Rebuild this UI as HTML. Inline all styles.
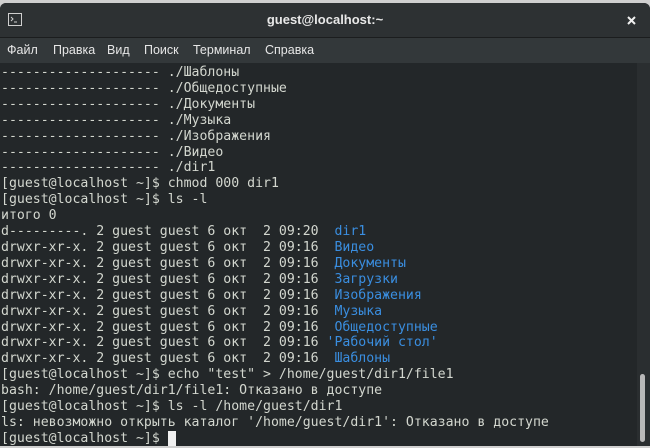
<!DOCTYPE html>
<html><head><meta charset="utf-8"><style>
html,body{margin:0;padding:0;width:650px;height:448px;overflow:hidden;background:#d0d0d0;}
.win{position:absolute;left:0;top:3px;width:650px;height:443px;background:#232729;border-radius:6px 6px 0 0;overflow:hidden;}
.title{position:absolute;left:0;top:0;width:650px;height:34px;background:#2d3133;border-bottom:1px solid #1b1d1e;color:#e8e8e8;font:bold 13px "Liberation Sans","DejaVu Sans",sans-serif;text-align:center;line-height:34px;}
.menu{position:absolute;left:0;top:35px;width:650px;height:25px;background:#33383a;color:#e6e6e6;font:12.5px "Liberation Sans","DejaVu Sans",sans-serif;line-height:25px;}
.menu span{position:absolute;top:0}
.term{position:absolute;left:1px;top:62px;width:636px;margin:0;color:#d3d7cf;font:13.2px "DejaVu Sans Mono","Liberation Mono",monospace;line-height:15.9px;white-space:pre;}
.b{color:#3a8ee0}
.sb{position:absolute;left:637px;top:60px;width:13px;height:383px;background:#2a2e30;}
.th{position:absolute;left:3px;top:311px;width:5px;height:68px;background:#b8b8b8;border-radius:3px;}
.cur{background:#f0f0f0;color:#232729}
</style></head><body>
<div class="win">
<div class="title">guest@localhost:~
<svg style="position:absolute;left:8px;top:10px" width="14" height="13"><rect x="0.5" y="0.5" width="13" height="12" fill="none" stroke="#cfcfcf"/><path d="M3 4l2 2-2 2M6 9h3" stroke="#cfcfcf" fill="none"/></svg>
<svg style="position:absolute;left:627px;top:13px" width="9" height="9"><path d="M1 1L8 8M8 1L1 8" stroke="#f0f0f0" stroke-width="2"/></svg>
</div>
<div class="menu"><span style="left:7px">Файл</span><span style="left:53px">Правка</span><span style="left:107px">Вид</span><span style="left:144px">Поиск</span><span style="left:193px">Терминал</span><span style="left:265px">Справка</span></div>
<pre class="term">-------------------- ./Шаблоны
-------------------- ./Общедоступные
-------------------- ./Документы
-------------------- ./Музыка
-------------------- ./Изображения
-------------------- ./Видео
-------------------- ./dir1
[guest@localhost ~]$ chmod 000 dir1
[guest@localhost ~]$ ls -l
итого 0
d---------. 2 guest guest 6 окт  2 09:20  <span class="b">dir1</span>
drwxr-xr-x. 2 guest guest 6 окт  2 09:16  <span class="b">Видео</span>
drwxr-xr-x. 2 guest guest 6 окт  2 09:16  <span class="b">Документы</span>
drwxr-xr-x. 2 guest guest 6 окт  2 09:16  <span class="b">Загрузки</span>
drwxr-xr-x. 2 guest guest 6 окт  2 09:16  <span class="b">Изображения</span>
drwxr-xr-x. 2 guest guest 6 окт  2 09:16  <span class="b">Музыка</span>
drwxr-xr-x. 2 guest guest 6 окт  2 09:16  <span class="b">Общедоступные</span>
drwxr-xr-x. 2 guest guest 6 окт  2 09:16 <span class="b">'Рабочий стол'</span>
drwxr-xr-x. 2 guest guest 6 окт  2 09:16  <span class="b">Шаблоны</span>
[guest@localhost ~]$ echo "test" &gt; /home/guest/dir1/file1
bash: /home/guest/dir1/file1: Отказано в доступе
[guest@localhost ~]$ ls -l /home/guest/dir1
ls: невозможно открыть каталог '/home/guest/dir1': Отказано в доступе
[guest@localhost ~]$ <span class="cur"> </span></pre>
<div class="sb"><div class="th"></div></div>
</div>
</body></html>
